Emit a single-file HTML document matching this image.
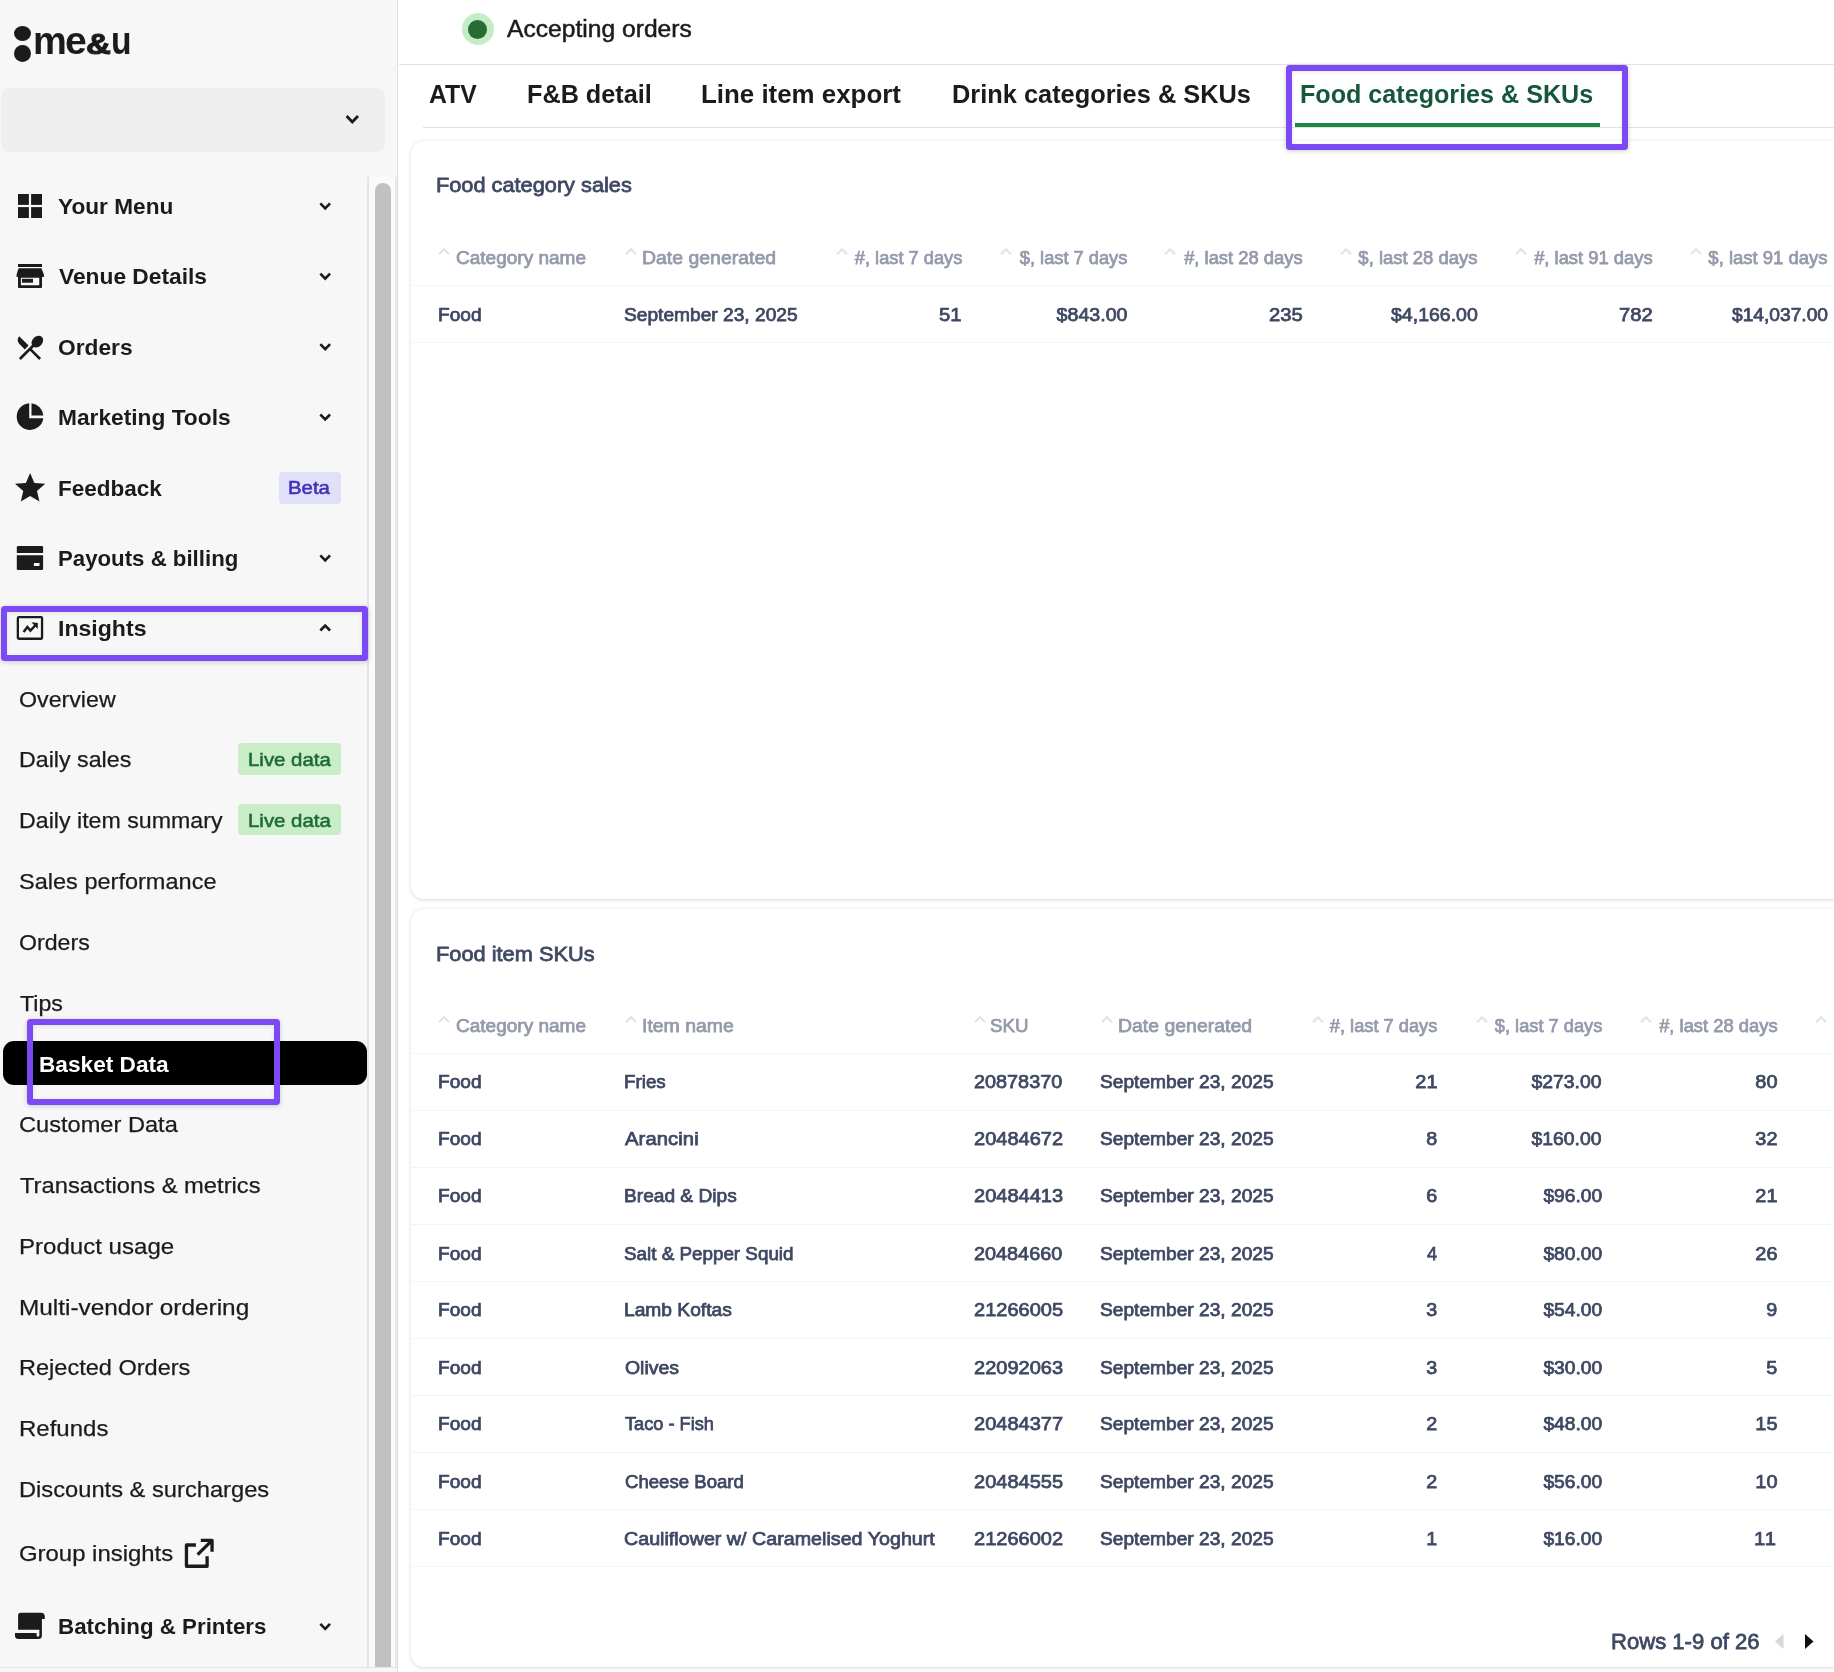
<!DOCTYPE html>
<html lang="en"><head><meta charset="utf-8"><title>me&amp;u – Basket Data</title>
<style>
html,body{margin:0;padding:0;}
body{width:1834px;height:1672px;overflow:hidden;position:relative;background:#fff;font-family:"Liberation Sans",sans-serif;}
.t{position:absolute;white-space:pre;font-family:"Liberation Sans",sans-serif;}
.abs{position:absolute;}
#text{position:absolute;left:0;top:0;width:1834px;height:1672px;will-change:transform;}
#sidebar{position:absolute;left:0;top:0;width:397.2px;height:1672px;background:#f7f7f7;border-right:1px solid #e0e0e0;box-sizing:content-box;}
#venue-select{position:absolute;left:1px;top:88px;width:383.5px;height:64px;background:#eeeeee;border-radius:8px;}
#track{position:absolute;left:367.1px;top:177px;width:26.1px;height:1490px;background:#fafafa;border-left:2px solid #e4e4e4;border-right:2px solid #e9e9e9;}
#thumb{position:absolute;left:375px;top:183px;width:16px;height:1490px;background:#c1c1c1;border-radius:8px 8px 0 0;}
#sidebar-foot{position:absolute;left:0;top:1667px;width:397.2px;height:5px;background:#f7f7f7;border-top:1.2px solid #e4e4e4;}
.badge{position:absolute;border-radius:4px;}
.hl{position:absolute;border:6px solid #7c4af4;border-radius:3.5px;box-sizing:border-box;box-shadow:0 1px 5px rgba(0,0,0,.20),inset 0 1px 4px rgba(0,0,0,.10);}
#pill{position:absolute;left:3px;top:1040.5px;width:364px;height:44px;background:#000;border-radius:11px;}
#topbar{position:absolute;left:398.5px;top:0;right:0;height:64px;border-bottom:1.5px solid #e3e3e3;background:#fff;}
#tabline{position:absolute;left:423px;top:126.5px;right:0;height:1.5px;background:#e2e2e2;}
#tabactive{position:absolute;left:1295px;top:123.3px;width:305px;height:4.2px;background:#1d874b;}
.card{position:absolute;left:411px;right:-11px;background:#fff;border-radius:13px;box-shadow:0 1px 4px rgba(0,0,0,.13),0 0 2px rgba(0,0,0,.05);}
.div{position:absolute;left:411px;right:0;height:1.3px;background:#f3f4f5;}
svg{position:absolute;overflow:visible;}
</style></head>
<body>
<!-- ===== main pane ===== -->
<div id="topbar"></div>
<div class="abs" style="left:461.9px;top:12.9px;width:32.2px;height:32.2px;border-radius:50%;background:#c5edc5;"></div>
<div class="abs" style="left:468px;top:19.6px;width:19.4px;height:19.4px;border-radius:50%;background:#256c35;"></div>
<div id="tabline"></div>
<div id="tabactive"></div>
<div class="card" id="card1" style="top:141px;height:757.5px;"></div>
<div class="card" id="card2" style="top:908.5px;height:758.5px;"></div>
<div class="div" style="top:285px"></div>
<div class="div" style="top:342px"></div>
<div class="div" style="top:1052.6px"></div>
<div class="div" style="top:1109.6px"></div>
<div class="div" style="top:1166.6px"></div>
<div class="div" style="top:1223.6px"></div>
<div class="div" style="top:1280.6px"></div>
<div class="div" style="top:1337.6px"></div>
<div class="div" style="top:1394.6px"></div>
<div class="div" style="top:1451.6px"></div>
<div class="div" style="top:1508.6px"></div>
<div class="div" style="top:1565.6px"></div>

<svg style="left:438px;top:248.3px" width="12" height="7" viewBox="0 0 12 7"><path d="M1 6.2 L6 1.2 L11 6.2" fill="none" stroke="#e1e3ea" stroke-width="2.1"/></svg>
<svg style="left:625px;top:248.3px" width="12" height="7" viewBox="0 0 12 7"><path d="M1 6.2 L6 1.2 L11 6.2" fill="none" stroke="#e1e3ea" stroke-width="2.1"/></svg>
<svg style="left:836px;top:248.3px" width="12" height="7" viewBox="0 0 12 7"><path d="M1 6.2 L6 1.2 L11 6.2" fill="none" stroke="#e1e3ea" stroke-width="2.1"/></svg>
<svg style="left:1000px;top:248.3px" width="12" height="7" viewBox="0 0 12 7"><path d="M1 6.2 L6 1.2 L11 6.2" fill="none" stroke="#e1e3ea" stroke-width="2.1"/></svg>
<svg style="left:1164px;top:248.3px" width="12" height="7" viewBox="0 0 12 7"><path d="M1 6.2 L6 1.2 L11 6.2" fill="none" stroke="#e1e3ea" stroke-width="2.1"/></svg>
<svg style="left:1339.5px;top:248.3px" width="12" height="7" viewBox="0 0 12 7"><path d="M1 6.2 L6 1.2 L11 6.2" fill="none" stroke="#e1e3ea" stroke-width="2.1"/></svg>
<svg style="left:1514.5px;top:248.3px" width="12" height="7" viewBox="0 0 12 7"><path d="M1 6.2 L6 1.2 L11 6.2" fill="none" stroke="#e1e3ea" stroke-width="2.1"/></svg>
<svg style="left:1690px;top:248.3px" width="12" height="7" viewBox="0 0 12 7"><path d="M1 6.2 L6 1.2 L11 6.2" fill="none" stroke="#e1e3ea" stroke-width="2.1"/></svg>
<svg style="left:438px;top:1016.3px" width="12" height="7" viewBox="0 0 12 7"><path d="M1 6.2 L6 1.2 L11 6.2" fill="none" stroke="#e1e3ea" stroke-width="2.1"/></svg>
<svg style="left:625px;top:1016.3px" width="12" height="7" viewBox="0 0 12 7"><path d="M1 6.2 L6 1.2 L11 6.2" fill="none" stroke="#e1e3ea" stroke-width="2.1"/></svg>
<svg style="left:973.5px;top:1016.3px" width="12" height="7" viewBox="0 0 12 7"><path d="M1 6.2 L6 1.2 L11 6.2" fill="none" stroke="#e1e3ea" stroke-width="2.1"/></svg>
<svg style="left:1101px;top:1016.3px" width="12" height="7" viewBox="0 0 12 7"><path d="M1 6.2 L6 1.2 L11 6.2" fill="none" stroke="#e1e3ea" stroke-width="2.1"/></svg>
<svg style="left:1312px;top:1016.3px" width="12" height="7" viewBox="0 0 12 7"><path d="M1 6.2 L6 1.2 L11 6.2" fill="none" stroke="#e1e3ea" stroke-width="2.1"/></svg>
<svg style="left:1476px;top:1016.3px" width="12" height="7" viewBox="0 0 12 7"><path d="M1 6.2 L6 1.2 L11 6.2" fill="none" stroke="#e1e3ea" stroke-width="2.1"/></svg>
<svg style="left:1640px;top:1016.3px" width="12" height="7" viewBox="0 0 12 7"><path d="M1 6.2 L6 1.2 L11 6.2" fill="none" stroke="#e1e3ea" stroke-width="2.1"/></svg>
<svg style="left:1815px;top:1016.3px" width="12" height="7" viewBox="0 0 12 7"><path d="M1 6.2 L6 1.2 L11 6.2" fill="none" stroke="#e1e3ea" stroke-width="2.1"/></svg>

<!-- pagination arrows -->
<svg style="left:1775px;top:1634px" width="9" height="15" viewBox="0 0 9 15"><path d="M8.5 0 L8.5 15 L0 7.5 Z" fill="#d6d8dc"/></svg>
<svg style="left:1805px;top:1634px" width="9" height="15" viewBox="0 0 9 15"><path d="M0 0 L0 15 L8.5 7.5 Z" fill="#111"/></svg>
<div class="hl" style="left:1285.7px;top:65.2px;width:342.3px;height:85px;"></div>

<!-- ===== sidebar ===== -->
<div id="sidebar"></div>
<div id="venue-select"></div>
<div id="track"></div>
<div id="thumb"></div>
<div id="sidebar-foot"></div>
<!-- logo dots -->
<div class="abs" style="left:14px;top:25.7px;width:17px;height:15px;border-radius:8.5px/7.5px;background:#1b1b1b;"></div>
<div class="abs" style="left:14px;top:44.5px;width:17px;height:17px;border-radius:50%;background:#1b1b1b;"></div>
<!-- chevrons -->
<svg style="left:0;top:0" width="1" height="1"><path d="M346.6 116.05 L352.3 121.95 L358.0 116.05" fill="none" stroke="#1b1b1b" stroke-width="2.9"/></svg>
<svg style="left:0;top:0" width="1" height="1"><path d="M320.34999999999997 203.3 L325.2 208.3 L330.05 203.3" fill="none" stroke="#1b1b1b" stroke-width="2.6"/></svg>
<svg style="left:0;top:0" width="1" height="1"><path d="M320.34999999999997 273.70000000000005 L325.2 278.70000000000005 L330.05 273.70000000000005" fill="none" stroke="#1b1b1b" stroke-width="2.6"/></svg>
<svg style="left:0;top:0" width="1" height="1"><path d="M320.34999999999997 344.1 L325.2 349.1 L330.05 344.1" fill="none" stroke="#1b1b1b" stroke-width="2.6"/></svg>
<svg style="left:0;top:0" width="1" height="1"><path d="M320.34999999999997 414.5 L325.2 419.5 L330.05 414.5" fill="none" stroke="#1b1b1b" stroke-width="2.6"/></svg>
<svg style="left:0;top:0" width="1" height="1"><path d="M320.34999999999997 555.3 L325.2 560.3 L330.05 555.3" fill="none" stroke="#1b1b1b" stroke-width="2.6"/></svg>
<svg style="left:0;top:0" width="1" height="1"><path d="M320.34999999999997 630.5 L325.2 625.5 L330.05 630.5" fill="none" stroke="#1b1b1b" stroke-width="2.6"/></svg>
<svg style="left:0;top:0" width="1" height="1"><path d="M320.34999999999997 1623.9 L325.2 1628.9 L330.05 1623.9" fill="none" stroke="#1b1b1b" stroke-width="2.6"/></svg>
<!-- icons -->
<svg style="left:0;top:0" width="400" height="1672" viewBox="0 0 400 1672" fill="#1b1b1b">
<!-- Your Menu: grid -->
<rect x="18" y="194" width="10.9" height="10.9"/><rect x="31.1" y="194" width="10.9" height="10.9"/>
<rect x="18" y="207.1" width="10.9" height="10.9"/><rect x="31.1" y="207.1" width="10.9" height="10.9"/>
<!-- Venue Details: store -->
<rect x="18" y="264" width="24" height="3"/>
<path d="M18.6 268.3 H41.4 L43.9 274.6 V276.9 H16.6 V274.6 Z"/>
<path d="M18 276 H42 V287.1 a1 1 0 0 1 -1 1 H19 a1 1 0 0 1 -1 -1 Z M20.9 277.75 V285.3 H39.25 V277.75 Z" fill-rule="evenodd"/>
<rect x="22" y="278.8" width="11" height="3.9"/>
<!-- Orders: restaurant_menu -->
<g transform="translate(14,331.6) scale(1.3333)"><path d="M8.1 13.34l2.83-2.83L3.91 3.5c-1.56 1.56-1.56 4.09 0 5.66l4.19 4.18zm6.78-1.81c1.53.71 3.68.21 5.27-1.38 1.91-1.91 2.28-4.65.81-6.12-1.46-1.46-4.2-1.1-6.12.81-1.59 1.59-2.09 3.74-1.38 5.27L3.7 19.87l1.41 1.41L12 14.41l6.88 6.88 1.41-1.41L13.41 13l1.47-1.47z"/></g>
<!-- Marketing Tools: pie -->
<path d="M29.2 403.3 A13.35 13.35 0 1 0 43.3 418.2 H29.2 Z"/>
<path d="M31.5 403.35 A13.35 13.35 0 0 1 43.3 415.5 H31.5 Z"/>
<!-- Feedback: star -->
<g transform="translate(12,469.9) scale(1.51)"><path d="M12 17.27L18.18 21l-1.64-7.03L22 9.24l-7.19-.61L12 2 9.19 8.63 2 9.24l5.46 4.73L5.82 21z"/></g>
<!-- Payouts: card -->
<path d="M16.8 552.9 V547.4 a1.3 1.3 0 0 1 1.3 -1.3 H41.8 a1.3 1.3 0 0 1 1.3 1.3 V552.9 Z"/>
<path d="M16.8 555.3 H43.1 V568.8 a1.3 1.3 0 0 1 -1.3 1.3 H18.1 a1.3 1.3 0 0 1 -1.3 -1.3 Z M33.9 563.1 V566.1 H39.5 V563.1 Z" fill-rule="evenodd"/>
<!-- Insights -->
<rect x="17.85" y="617.15" width="24.2" height="21.6" rx="1" fill="none" stroke="#1b1b1b" stroke-width="2.3"/>
<path d="M23.6 631.9 L27.4 627.0 L30.4 630.7 L35.6 625.0" fill="none" stroke="#1b1b1b" stroke-width="2.5" stroke-linejoin="miter"/>
<path d="M31.45 622.3 L37.85 622.9 L37.7 629 Z"/>
<!-- Group insights: open in new -->
<path d="M195.9 1545 H186.45 V1566.25 H207.1 V1556.2" fill="none" stroke="#1b1b1b" stroke-width="3.3" stroke-linejoin="round"/>
<path d="M200.8 1540.35 H212.05 V1551.8 M212 1540.4 L197.6 1554.6" fill="none" stroke="#1b1b1b" stroke-width="3.3" stroke-linejoin="round"/>
<!-- Batching & Printers: scroll -->
<path d="M18.1 1629.8 V1615.4 a2.7 2.7 0 0 1 2.7 -2.7 H41 a3.8 3.8 0 0 1 3.8 3.8 V1619 H41.9 V1635.5 a3.5 3.5 0 0 1 -3.5 3.5 H18.5 a3.5 3.5 0 0 1 -3.5 -3.5 V1632.9 H36.6 V1635.3 a1.375 1.4 0 0 0 2.75 0 V1629.8 Z"/>
</svg>

<div class="badge" style="left:279px;top:472.2px;width:62px;height:31.4px;background:#e0e0f8;"></div>
<div class="badge" style="left:238px;top:743.3px;width:103px;height:31.3px;background:#c9edc7;"></div>
<div class="badge" style="left:238px;top:804px;width:103px;height:31.3px;background:#c9edc7;"></div>
<div id="pill"></div>
<div class="hl" style="left:1px;top:606px;width:367.1px;height:55px;"></div>
<div class="hl" style="left:27.1px;top:1019.3px;width:253.3px;height:86px;"></div>
<!-- ===== text ===== -->
<div id="text">
<span class="t" style="top:20.56px;font-size:39.5px;line-height:39.5px;font-weight:700;color:#1b1b1b;left:32.90px;transform:scaleX(0.963);transform-origin:0 0;">m</span>
<span class="t" style="top:20.56px;font-size:39.5px;line-height:39.5px;font-weight:700;color:#1b1b1b;left:64.60px;transform:scaleX(0.99);transform-origin:0 0;">e</span>
<span class="t" style="top:29.03px;font-size:29.5px;line-height:29.5px;font-weight:700;color:#1b1b1b;left:85.50px;-webkit-text-stroke:1.0px #1b1b1b;transform:scaleX(1.17);transform-origin:0 0;">&amp;</span>
<span class="t" style="top:20.56px;font-size:39.5px;line-height:39.5px;font-weight:700;color:#1b1b1b;left:110.70px;transform:scaleX(0.85);transform-origin:0 0;">u</span>
<span class="t" style="top:195.65px;font-size:22.5px;line-height:22.5px;font-weight:700;color:#1b1b1b;left:58.20px;transform:scaleX(1.0063);transform-origin:0 0;">Your Menu</span>
<span class="t" style="top:266.05px;font-size:22.5px;line-height:22.5px;font-weight:700;color:#1b1b1b;left:59.00px;transform:scaleX(1.0116);transform-origin:0 0;">Venue Details</span>
<span class="t" style="top:337.15px;font-size:22.5px;line-height:22.5px;font-weight:700;color:#1b1b1b;left:58.20px;transform:scaleX(1.0109);transform-origin:0 0;">Orders</span>
<span class="t" style="top:406.85px;font-size:22.5px;line-height:22.5px;font-weight:700;color:#1b1b1b;left:58.20px;transform:scaleX(1.0102);transform-origin:0 0;">Marketing Tools</span>
<span class="t" style="top:477.95px;font-size:22.5px;line-height:22.5px;font-weight:700;color:#1b1b1b;left:58.20px;transform:scaleX(0.9999);transform-origin:0 0;">Feedback</span>
<span class="t" style="top:547.65px;font-size:22.5px;line-height:22.5px;font-weight:700;color:#1b1b1b;left:58.20px;transform:scaleX(0.9878);transform-origin:0 0;">Payouts &amp; billing</span>
<span class="t" style="top:618.05px;font-size:22.5px;line-height:22.5px;font-weight:700;color:#1b1b1b;left:58.20px;transform:scaleX(1.0259);transform-origin:0 0;">Insights</span>
<span class="t" style="top:1615.65px;font-size:22.5px;line-height:22.5px;font-weight:700;color:#1b1b1b;left:58.20px;transform:scaleX(0.9926);transform-origin:0 0;">Batching &amp; Printers</span>
<span class="t" style="top:688.95px;font-size:22.5px;line-height:22.5px;font-weight:400;color:#1b1b1b;left:19.30px;transform:scaleX(1.0311);transform-origin:0 0;-webkit-text-stroke:0.25px #1b1b1b;">Overview</span>
<span class="t" style="top:749.05px;font-size:22.5px;line-height:22.5px;font-weight:400;color:#1b1b1b;left:18.50px;transform:scaleX(1.0322);transform-origin:0 0;-webkit-text-stroke:0.25px #1b1b1b;">Daily sales</span>
<span class="t" style="top:809.85px;font-size:22.5px;line-height:22.5px;font-weight:400;color:#1b1b1b;left:18.50px;transform:scaleX(1.0307);transform-origin:0 0;-webkit-text-stroke:0.25px #1b1b1b;">Daily item summary</span>
<span class="t" style="top:870.65px;font-size:22.5px;line-height:22.5px;font-weight:400;color:#1b1b1b;left:19.30px;transform:scaleX(1.0458);transform-origin:0 0;-webkit-text-stroke:0.25px #1b1b1b;">Sales performance</span>
<span class="t" style="top:932.15px;font-size:22.5px;line-height:22.5px;font-weight:400;color:#1b1b1b;left:19.30px;transform:scaleX(1.0281);transform-origin:0 0;-webkit-text-stroke:0.25px #1b1b1b;">Orders</span>
<span class="t" style="top:992.95px;font-size:22.5px;line-height:22.5px;font-weight:400;color:#1b1b1b;left:20.10px;transform:scaleX(1.0295);transform-origin:0 0;-webkit-text-stroke:0.25px #1b1b1b;">Tips</span>
<span class="t" style="top:1113.85px;font-size:22.5px;line-height:22.5px;font-weight:400;color:#1b1b1b;left:19.30px;transform:scaleX(1.0495);transform-origin:0 0;-webkit-text-stroke:0.25px #1b1b1b;">Customer Data</span>
<span class="t" style="top:1174.65px;font-size:22.5px;line-height:22.5px;font-weight:400;color:#1b1b1b;left:20.10px;transform:scaleX(1.0552);transform-origin:0 0;-webkit-text-stroke:0.25px #1b1b1b;">Transactions &amp; metrics</span>
<span class="t" style="top:1236.15px;font-size:22.5px;line-height:22.5px;font-weight:400;color:#1b1b1b;left:18.50px;transform:scaleX(1.0695);transform-origin:0 0;-webkit-text-stroke:0.25px #1b1b1b;">Product usage</span>
<span class="t" style="top:1296.95px;font-size:22.5px;line-height:22.5px;font-weight:400;color:#1b1b1b;left:18.50px;transform:scaleX(1.0827);transform-origin:0 0;-webkit-text-stroke:0.25px #1b1b1b;">Multi-vendor ordering</span>
<span class="t" style="top:1357.05px;font-size:22.5px;line-height:22.5px;font-weight:400;color:#1b1b1b;left:18.50px;transform:scaleX(1.0462);transform-origin:0 0;-webkit-text-stroke:0.25px #1b1b1b;">Rejected Orders</span>
<span class="t" style="top:1417.85px;font-size:22.5px;line-height:22.5px;font-weight:400;color:#1b1b1b;left:18.50px;transform:scaleX(1.0667);transform-origin:0 0;-webkit-text-stroke:0.25px #1b1b1b;">Refunds</span>
<span class="t" style="top:1478.65px;font-size:22.5px;line-height:22.5px;font-weight:400;color:#1b1b1b;left:18.50px;transform:scaleX(1.0529);transform-origin:0 0;-webkit-text-stroke:0.25px #1b1b1b;">Discounts &amp; surcharges</span>
<span class="t" style="top:1542.65px;font-size:22.5px;line-height:22.5px;font-weight:400;color:#1b1b1b;left:19.30px;transform:scaleX(1.0626);transform-origin:0 0;-webkit-text-stroke:0.25px #1b1b1b;">Group insights</span>
<span class="t" style="top:1054.90px;font-size:21.5px;line-height:21.5px;font-weight:700;color:#ffffff;left:39.20px;transform:scaleX(1.0535);transform-origin:0 0;">Basket Data</span>
<span class="t" style="top:478.96px;font-size:18.6px;line-height:18.6px;font-weight:400;color:#4230b8;left:288.30px;transform:scaleX(1.0954);transform-origin:0 0;-webkit-text-stroke:0.55px #4230b8;">Beta</span>
<span class="t" style="top:750.96px;font-size:18.6px;line-height:18.6px;font-weight:400;color:#1f6b35;left:247.98px;transform:scaleX(1.0971);transform-origin:0 0;-webkit-text-stroke:0.55px #1f6b35;">Live data</span>
<span class="t" style="top:811.76px;font-size:18.6px;line-height:18.6px;font-weight:400;color:#1f6b35;left:247.98px;transform:scaleX(1.0971);transform-origin:0 0;-webkit-text-stroke:0.55px #1f6b35;">Live data</span>
<span class="t" style="top:17.78px;font-size:23.3px;line-height:23.3px;font-weight:400;color:#1b1b1b;left:507.22px;transform:scaleX(1.0570);transform-origin:0 0;-webkit-text-stroke:0.5px #1b1b1b;">Accepting orders</span>
<span class="t" style="top:81.51px;font-size:25.5px;line-height:25.5px;font-weight:700;color:#1b1b1b;left:429.20px;transform:scaleX(0.9713);transform-origin:0 0;">ATV</span>
<span class="t" style="top:81.51px;font-size:25.5px;line-height:25.5px;font-weight:700;color:#1b1b1b;left:527.40px;transform:scaleX(0.9894);transform-origin:0 0;">F&amp;B detail</span>
<span class="t" style="top:81.51px;font-size:25.5px;line-height:25.5px;font-weight:700;color:#1b1b1b;left:701.16px;transform:scaleX(1.0152);transform-origin:0 0;">Line item export</span>
<span class="t" style="top:81.51px;font-size:25.5px;line-height:25.5px;font-weight:700;color:#1b1b1b;left:952.40px;transform:scaleX(0.9951);transform-origin:0 0;">Drink categories &amp; SKUs</span>
<span class="t" style="top:81.51px;font-size:25.5px;line-height:25.5px;font-weight:700;color:#15573a;left:1300.40px;transform:scaleX(0.9853);transform-origin:0 0;">Food categories &amp; SKUs</span>
<span class="t" style="top:175.18px;font-size:20.7px;line-height:20.7px;font-weight:400;color:#3f4863;left:436.20px;transform:scaleX(1.0510);transform-origin:0 0;-webkit-text-stroke:0.755px #3f4863;">Food category sales</span>
<span class="t" style="top:944.48px;font-size:20.7px;line-height:20.7px;font-weight:400;color:#3f4863;left:436.20px;transform:scaleX(1.0529);transform-origin:0 0;-webkit-text-stroke:0.755px #3f4863;">Food item SKUs</span>
<span class="t" style="top:248.57px;font-size:18.4px;line-height:18.4px;font-weight:400;color:#949aab;left:456.00px;transform:scaleX(1.0338);transform-origin:0 0;-webkit-text-stroke:0.75px #949aab;">Category name</span>
<span class="t" style="top:248.57px;font-size:18.4px;line-height:18.4px;font-weight:400;color:#949aab;left:642.20px;transform:scaleX(1.0571);transform-origin:0 0;-webkit-text-stroke:0.75px #949aab;">Date generated</span>
<span class="t" style="top:248.57px;font-size:18.4px;line-height:18.4px;font-weight:400;color:#949aab;right:872.00px;transform:scaleX(0.9926);transform-origin:100% 0;-webkit-text-stroke:0.75px #949aab;">#, last 7 days</span>
<span class="t" style="top:248.57px;font-size:18.4px;line-height:18.4px;font-weight:400;color:#949aab;right:707.00px;transform:scaleX(0.9926);transform-origin:100% 0;-webkit-text-stroke:0.75px #949aab;">$, last 7 days</span>
<span class="t" style="top:248.57px;font-size:18.4px;line-height:18.4px;font-weight:400;color:#949aab;right:531.76px;transform:scaleX(0.9987);transform-origin:100% 0;-webkit-text-stroke:0.75px #949aab;">#, last 28 days</span>
<span class="t" style="top:248.57px;font-size:18.4px;line-height:18.4px;font-weight:400;color:#949aab;right:356.20px;transform:scaleX(1.0054);transform-origin:100% 0;-webkit-text-stroke:0.75px #949aab;">$, last 28 days</span>
<span class="t" style="top:248.57px;font-size:18.4px;line-height:18.4px;font-weight:400;color:#949aab;right:181.66px;transform:scaleX(0.9987);transform-origin:100% 0;-webkit-text-stroke:0.75px #949aab;">#, last 91 days</span>
<span class="t" style="top:248.57px;font-size:18.4px;line-height:18.4px;font-weight:400;color:#949aab;right:6.32px;transform:scaleX(1.0054);transform-origin:100% 0;-webkit-text-stroke:0.75px #949aab;">$, last 91 days</span>
<span class="t" style="top:305.77px;font-size:18.4px;line-height:18.4px;font-weight:400;color:#3f4863;left:438.20px;transform:scaleX(1.0376);transform-origin:0 0;-webkit-text-stroke:0.75px #3f4863;">Food</span>
<span class="t" style="top:305.77px;font-size:18.4px;line-height:18.4px;font-weight:400;color:#3f4863;left:624.20px;transform:scaleX(1.0417);transform-origin:0 0;-webkit-text-stroke:0.75px #3f4863;">September 23, 2025</span>
<span class="t" style="top:305.77px;font-size:18.4px;line-height:18.4px;font-weight:400;color:#3f4863;letter-spacing:0.168px;right:871.82px;transform:scaleX(1.1000);transform-origin:100% 0;-webkit-text-stroke:0.75px #3f4863;">51</span>
<span class="t" style="top:305.77px;font-size:18.4px;line-height:18.4px;font-weight:400;color:#3f4863;right:707.00px;transform:scaleX(1.0664);transform-origin:100% 0;-webkit-text-stroke:0.75px #3f4863;">$843.00</span>
<span class="t" style="top:305.77px;font-size:18.4px;line-height:18.4px;font-weight:400;color:#3f4863;letter-spacing:0.020px;right:531.74px;transform:scaleX(1.1000);transform-origin:100% 0;-webkit-text-stroke:0.75px #3f4863;">235</span>
<span class="t" style="top:305.77px;font-size:18.4px;line-height:18.4px;font-weight:400;color:#3f4863;right:356.20px;transform:scaleX(1.0608);transform-origin:100% 0;-webkit-text-stroke:0.75px #3f4863;">$4,166.00</span>
<span class="t" style="top:305.77px;font-size:18.4px;line-height:18.4px;font-weight:400;color:#3f4863;letter-spacing:0.020px;right:181.64px;transform:scaleX(1.1000);transform-origin:100% 0;-webkit-text-stroke:0.75px #3f4863;">782</span>
<span class="t" style="top:305.77px;font-size:18.4px;line-height:18.4px;font-weight:400;color:#3f4863;right:6.32px;transform:scaleX(1.0440);transform-origin:100% 0;-webkit-text-stroke:0.75px #3f4863;">$14,037.00</span>
<span class="t" style="top:1016.57px;font-size:18.4px;line-height:18.4px;font-weight:400;color:#949aab;left:456.00px;transform:scaleX(1.0338);transform-origin:0 0;-webkit-text-stroke:0.75px #949aab;">Category name</span>
<span class="t" style="top:1016.57px;font-size:18.4px;line-height:18.4px;font-weight:400;color:#949aab;left:642.20px;transform:scaleX(1.0567);transform-origin:0 0;-webkit-text-stroke:0.75px #949aab;">Item name</span>
<span class="t" style="top:1016.57px;font-size:18.4px;line-height:18.4px;font-weight:400;color:#949aab;left:990.42px;transform:scaleX(1.0146);transform-origin:0 0;-webkit-text-stroke:0.75px #949aab;">SKU</span>
<span class="t" style="top:1016.57px;font-size:18.4px;line-height:18.4px;font-weight:400;color:#949aab;left:1117.52px;transform:scaleX(1.0571);transform-origin:0 0;-webkit-text-stroke:0.75px #949aab;">Date generated</span>
<span class="t" style="top:1016.57px;font-size:18.4px;line-height:18.4px;font-weight:400;color:#949aab;right:396.44px;transform:scaleX(0.9926);transform-origin:100% 0;-webkit-text-stroke:0.75px #949aab;">#, last 7 days</span>
<span class="t" style="top:1016.57px;font-size:18.4px;line-height:18.4px;font-weight:400;color:#949aab;right:232.10px;transform:scaleX(0.9926);transform-origin:100% 0;-webkit-text-stroke:0.75px #949aab;">$, last 7 days</span>
<span class="t" style="top:1016.57px;font-size:18.4px;line-height:18.4px;font-weight:400;color:#949aab;right:56.88px;transform:scaleX(0.9987);transform-origin:100% 0;-webkit-text-stroke:0.75px #949aab;">#, last 28 days</span>
<span class="t" style="top:1073.42px;font-size:18.4px;line-height:18.4px;font-weight:400;color:#3f4863;left:438.20px;transform:scaleX(1.0376);transform-origin:0 0;-webkit-text-stroke:0.75px #3f4863;">Food</span>
<span class="t" style="top:1073.42px;font-size:18.4px;line-height:18.4px;font-weight:400;color:#3f4863;left:624.20px;transform:scaleX(1.0202);transform-origin:0 0;-webkit-text-stroke:0.75px #3f4863;">Fries</span>
<span class="t" style="top:1073.42px;font-size:18.4px;line-height:18.4px;font-weight:400;color:#3f4863;left:974.00px;transform:scaleX(1.0781);transform-origin:0 0;-webkit-text-stroke:0.75px #3f4863;">20878370</span>
<span class="t" style="top:1073.42px;font-size:18.4px;line-height:18.4px;font-weight:400;color:#3f4863;left:1100.20px;transform:scaleX(1.0417);transform-origin:0 0;-webkit-text-stroke:0.75px #3f4863;">September 23, 2025</span>
<span class="t" style="top:1073.42px;font-size:18.4px;line-height:18.4px;font-weight:400;color:#3f4863;right:396.44px;transform:scaleX(1.0816);transform-origin:100% 0;-webkit-text-stroke:0.75px #3f4863;">21</span>
<span class="t" style="top:1073.42px;font-size:18.4px;line-height:18.4px;font-weight:400;color:#3f4863;right:232.10px;transform:scaleX(1.0529);transform-origin:100% 0;-webkit-text-stroke:0.75px #3f4863;">$273.00</span>
<span class="t" style="top:1073.42px;font-size:18.4px;line-height:18.4px;font-weight:400;color:#3f4863;right:56.88px;transform:scaleX(1.0816);transform-origin:100% 0;-webkit-text-stroke:0.75px #3f4863;">80</span>
<span class="t" style="top:1130.42px;font-size:18.4px;line-height:18.4px;font-weight:400;color:#3f4863;left:438.20px;transform:scaleX(1.0376);transform-origin:0 0;-webkit-text-stroke:0.75px #3f4863;">Food</span>
<span class="t" style="top:1130.42px;font-size:18.4px;line-height:18.4px;font-weight:400;color:#3f4863;letter-spacing:0.078px;left:625.00px;transform:scaleX(1.1000);transform-origin:0 0;-webkit-text-stroke:0.75px #3f4863;">Arancini</span>
<span class="t" style="top:1130.42px;font-size:18.4px;line-height:18.4px;font-weight:400;color:#3f4863;left:974.00px;transform:scaleX(1.0879);transform-origin:0 0;-webkit-text-stroke:0.75px #3f4863;">20484672</span>
<span class="t" style="top:1130.42px;font-size:18.4px;line-height:18.4px;font-weight:400;color:#3f4863;left:1100.20px;transform:scaleX(1.0417);transform-origin:0 0;-webkit-text-stroke:0.75px #3f4863;">September 23, 2025</span>
<span class="t" style="top:1130.42px;font-size:18.4px;line-height:18.4px;font-weight:400;color:#3f4863;right:396.44px;transform:scaleX(1.0719);transform-origin:100% 0;-webkit-text-stroke:0.75px #3f4863;">8</span>
<span class="t" style="top:1130.42px;font-size:18.4px;line-height:18.4px;font-weight:400;color:#3f4863;right:232.10px;transform:scaleX(1.0529);transform-origin:100% 0;-webkit-text-stroke:0.75px #3f4863;">$160.00</span>
<span class="t" style="top:1130.42px;font-size:18.4px;line-height:18.4px;font-weight:400;color:#3f4863;right:56.88px;transform:scaleX(1.0816);transform-origin:100% 0;-webkit-text-stroke:0.75px #3f4863;">32</span>
<span class="t" style="top:1187.42px;font-size:18.4px;line-height:18.4px;font-weight:400;color:#3f4863;left:438.20px;transform:scaleX(1.0376);transform-origin:0 0;-webkit-text-stroke:0.75px #3f4863;">Food</span>
<span class="t" style="top:1187.42px;font-size:18.4px;line-height:18.4px;font-weight:400;color:#3f4863;left:624.20px;transform:scaleX(1.0401);transform-origin:0 0;-webkit-text-stroke:0.75px #3f4863;">Bread &amp; Dips</span>
<span class="t" style="top:1187.42px;font-size:18.4px;line-height:18.4px;font-weight:400;color:#3f4863;left:974.00px;transform:scaleX(1.0879);transform-origin:0 0;-webkit-text-stroke:0.75px #3f4863;">20484413</span>
<span class="t" style="top:1187.42px;font-size:18.4px;line-height:18.4px;font-weight:400;color:#3f4863;left:1100.20px;transform:scaleX(1.0417);transform-origin:0 0;-webkit-text-stroke:0.75px #3f4863;">September 23, 2025</span>
<span class="t" style="top:1187.42px;font-size:18.4px;line-height:18.4px;font-weight:400;color:#3f4863;right:396.44px;transform:scaleX(1.0719);transform-origin:100% 0;-webkit-text-stroke:0.75px #3f4863;">6</span>
<span class="t" style="top:1187.42px;font-size:18.4px;line-height:18.4px;font-weight:400;color:#3f4863;right:232.10px;transform:scaleX(1.0459);transform-origin:100% 0;-webkit-text-stroke:0.75px #3f4863;">$96.00</span>
<span class="t" style="top:1187.42px;font-size:18.4px;line-height:18.4px;font-weight:400;color:#3f4863;right:56.88px;transform:scaleX(1.0816);transform-origin:100% 0;-webkit-text-stroke:0.75px #3f4863;">21</span>
<span class="t" style="top:1244.77px;font-size:18.4px;line-height:18.4px;font-weight:400;color:#3f4863;left:438.20px;transform:scaleX(1.0376);transform-origin:0 0;-webkit-text-stroke:0.75px #3f4863;">Food</span>
<span class="t" style="top:1244.77px;font-size:18.4px;line-height:18.4px;font-weight:400;color:#3f4863;left:624.20px;transform:scaleX(1.0234);transform-origin:0 0;-webkit-text-stroke:0.75px #3f4863;">Salt &amp; Pepper Squid</span>
<span class="t" style="top:1244.77px;font-size:18.4px;line-height:18.4px;font-weight:400;color:#3f4863;left:974.00px;transform:scaleX(1.0781);transform-origin:0 0;-webkit-text-stroke:0.75px #3f4863;">20484660</span>
<span class="t" style="top:1244.77px;font-size:18.4px;line-height:18.4px;font-weight:400;color:#3f4863;left:1100.20px;transform:scaleX(1.0417);transform-origin:0 0;-webkit-text-stroke:0.75px #3f4863;">September 23, 2025</span>
<span class="t" style="top:1244.77px;font-size:18.4px;line-height:18.4px;font-weight:400;color:#3f4863;right:396.44px;transform:scaleX(0.9937);transform-origin:100% 0;-webkit-text-stroke:0.75px #3f4863;">4</span>
<span class="t" style="top:1244.77px;font-size:18.4px;line-height:18.4px;font-weight:400;color:#3f4863;right:232.10px;transform:scaleX(1.0459);transform-origin:100% 0;-webkit-text-stroke:0.75px #3f4863;">$80.00</span>
<span class="t" style="top:1244.77px;font-size:18.4px;line-height:18.4px;font-weight:400;color:#3f4863;right:56.88px;transform:scaleX(1.0816);transform-origin:100% 0;-webkit-text-stroke:0.75px #3f4863;">26</span>
<span class="t" style="top:1301.42px;font-size:18.4px;line-height:18.4px;font-weight:400;color:#3f4863;left:438.20px;transform:scaleX(1.0376);transform-origin:0 0;-webkit-text-stroke:0.75px #3f4863;">Food</span>
<span class="t" style="top:1301.42px;font-size:18.4px;line-height:18.4px;font-weight:400;color:#3f4863;left:624.20px;transform:scaleX(1.0441);transform-origin:0 0;-webkit-text-stroke:0.75px #3f4863;">Lamb Koftas</span>
<span class="t" style="top:1301.42px;font-size:18.4px;line-height:18.4px;font-weight:400;color:#3f4863;left:974.00px;transform:scaleX(1.0879);transform-origin:0 0;-webkit-text-stroke:0.75px #3f4863;">21266005</span>
<span class="t" style="top:1301.42px;font-size:18.4px;line-height:18.4px;font-weight:400;color:#3f4863;left:1100.20px;transform:scaleX(1.0417);transform-origin:0 0;-webkit-text-stroke:0.75px #3f4863;">September 23, 2025</span>
<span class="t" style="top:1301.42px;font-size:18.4px;line-height:18.4px;font-weight:400;color:#3f4863;right:396.44px;transform:scaleX(1.0719);transform-origin:100% 0;-webkit-text-stroke:0.75px #3f4863;">3</span>
<span class="t" style="top:1301.42px;font-size:18.4px;line-height:18.4px;font-weight:400;color:#3f4863;right:232.10px;transform:scaleX(1.0459);transform-origin:100% 0;-webkit-text-stroke:0.75px #3f4863;">$54.00</span>
<span class="t" style="top:1301.42px;font-size:18.4px;line-height:18.4px;font-weight:400;color:#3f4863;right:56.88px;transform:scaleX(1.0719);transform-origin:100% 0;-webkit-text-stroke:0.75px #3f4863;">9</span>
<span class="t" style="top:1358.77px;font-size:18.4px;line-height:18.4px;font-weight:400;color:#3f4863;left:438.20px;transform:scaleX(1.0376);transform-origin:0 0;-webkit-text-stroke:0.75px #3f4863;">Food</span>
<span class="t" style="top:1358.77px;font-size:18.4px;line-height:18.4px;font-weight:400;color:#3f4863;left:625.00px;transform:scaleX(1.0566);transform-origin:0 0;-webkit-text-stroke:0.75px #3f4863;">Olives</span>
<span class="t" style="top:1358.77px;font-size:18.4px;line-height:18.4px;font-weight:400;color:#3f4863;left:974.00px;transform:scaleX(1.0879);transform-origin:0 0;-webkit-text-stroke:0.75px #3f4863;">22092063</span>
<span class="t" style="top:1358.77px;font-size:18.4px;line-height:18.4px;font-weight:400;color:#3f4863;left:1100.20px;transform:scaleX(1.0417);transform-origin:0 0;-webkit-text-stroke:0.75px #3f4863;">September 23, 2025</span>
<span class="t" style="top:1358.77px;font-size:18.4px;line-height:18.4px;font-weight:400;color:#3f4863;right:396.44px;transform:scaleX(1.0719);transform-origin:100% 0;-webkit-text-stroke:0.75px #3f4863;">3</span>
<span class="t" style="top:1358.77px;font-size:18.4px;line-height:18.4px;font-weight:400;color:#3f4863;right:232.10px;transform:scaleX(1.0459);transform-origin:100% 0;-webkit-text-stroke:0.75px #3f4863;">$30.00</span>
<span class="t" style="top:1358.77px;font-size:18.4px;line-height:18.4px;font-weight:400;color:#3f4863;right:56.88px;transform:scaleX(1.0719);transform-origin:100% 0;-webkit-text-stroke:0.75px #3f4863;">5</span>
<span class="t" style="top:1415.42px;font-size:18.4px;line-height:18.4px;font-weight:400;color:#3f4863;left:438.20px;transform:scaleX(1.0376);transform-origin:0 0;-webkit-text-stroke:0.75px #3f4863;">Food</span>
<span class="t" style="top:1415.42px;font-size:18.4px;line-height:18.4px;font-weight:400;color:#3f4863;left:625.00px;transform:scaleX(0.9885);transform-origin:0 0;-webkit-text-stroke:0.75px #3f4863;">Taco - Fish</span>
<span class="t" style="top:1415.42px;font-size:18.4px;line-height:18.4px;font-weight:400;color:#3f4863;left:974.00px;transform:scaleX(1.0879);transform-origin:0 0;-webkit-text-stroke:0.75px #3f4863;">20484377</span>
<span class="t" style="top:1415.42px;font-size:18.4px;line-height:18.4px;font-weight:400;color:#3f4863;left:1100.20px;transform:scaleX(1.0417);transform-origin:0 0;-webkit-text-stroke:0.75px #3f4863;">September 23, 2025</span>
<span class="t" style="top:1415.42px;font-size:18.4px;line-height:18.4px;font-weight:400;color:#3f4863;right:396.44px;transform:scaleX(1.0719);transform-origin:100% 0;-webkit-text-stroke:0.75px #3f4863;">2</span>
<span class="t" style="top:1415.42px;font-size:18.4px;line-height:18.4px;font-weight:400;color:#3f4863;right:232.10px;transform:scaleX(1.0459);transform-origin:100% 0;-webkit-text-stroke:0.75px #3f4863;">$48.00</span>
<span class="t" style="top:1415.42px;font-size:18.4px;line-height:18.4px;font-weight:400;color:#3f4863;right:56.88px;transform:scaleX(1.0816);transform-origin:100% 0;-webkit-text-stroke:0.75px #3f4863;">15</span>
<span class="t" style="top:1472.77px;font-size:18.4px;line-height:18.4px;font-weight:400;color:#3f4863;left:438.20px;transform:scaleX(1.0376);transform-origin:0 0;-webkit-text-stroke:0.75px #3f4863;">Food</span>
<span class="t" style="top:1472.77px;font-size:18.4px;line-height:18.4px;font-weight:400;color:#3f4863;left:625.00px;transform:scaleX(1.0112);transform-origin:0 0;-webkit-text-stroke:0.75px #3f4863;">Cheese Board</span>
<span class="t" style="top:1472.77px;font-size:18.4px;line-height:18.4px;font-weight:400;color:#3f4863;left:974.00px;transform:scaleX(1.0879);transform-origin:0 0;-webkit-text-stroke:0.75px #3f4863;">20484555</span>
<span class="t" style="top:1472.77px;font-size:18.4px;line-height:18.4px;font-weight:400;color:#3f4863;left:1100.20px;transform:scaleX(1.0417);transform-origin:0 0;-webkit-text-stroke:0.75px #3f4863;">September 23, 2025</span>
<span class="t" style="top:1472.77px;font-size:18.4px;line-height:18.4px;font-weight:400;color:#3f4863;right:396.44px;transform:scaleX(1.0719);transform-origin:100% 0;-webkit-text-stroke:0.75px #3f4863;">2</span>
<span class="t" style="top:1472.77px;font-size:18.4px;line-height:18.4px;font-weight:400;color:#3f4863;right:232.10px;transform:scaleX(1.0459);transform-origin:100% 0;-webkit-text-stroke:0.75px #3f4863;">$56.00</span>
<span class="t" style="top:1472.77px;font-size:18.4px;line-height:18.4px;font-weight:400;color:#3f4863;right:56.88px;transform:scaleX(1.0816);transform-origin:100% 0;-webkit-text-stroke:0.75px #3f4863;">10</span>
<span class="t" style="top:1529.77px;font-size:18.4px;line-height:18.4px;font-weight:400;color:#3f4863;left:438.20px;transform:scaleX(1.0376);transform-origin:0 0;-webkit-text-stroke:0.75px #3f4863;">Food</span>
<span class="t" style="top:1529.77px;font-size:18.4px;line-height:18.4px;font-weight:400;color:#3f4863;left:624.20px;transform:scaleX(1.0706);transform-origin:0 0;-webkit-text-stroke:0.75px #3f4863;">Cauliflower w/ Caramelised Yoghurt</span>
<span class="t" style="top:1529.77px;font-size:18.4px;line-height:18.4px;font-weight:400;color:#3f4863;left:974.00px;transform:scaleX(1.0879);transform-origin:0 0;-webkit-text-stroke:0.75px #3f4863;">21266002</span>
<span class="t" style="top:1529.77px;font-size:18.4px;line-height:18.4px;font-weight:400;color:#3f4863;left:1100.20px;transform:scaleX(1.0417);transform-origin:0 0;-webkit-text-stroke:0.75px #3f4863;">September 23, 2025</span>
<span class="t" style="top:1529.77px;font-size:18.4px;line-height:18.4px;font-weight:400;color:#3f4863;right:396.44px;transform:scaleX(1.0719);transform-origin:100% 0;-webkit-text-stroke:0.75px #3f4863;">1</span>
<span class="t" style="top:1529.77px;font-size:18.4px;line-height:18.4px;font-weight:400;color:#3f4863;right:232.10px;transform:scaleX(1.0459);transform-origin:100% 0;-webkit-text-stroke:0.75px #3f4863;">$16.00</span>
<span class="t" style="top:1529.77px;font-size:18.4px;line-height:18.4px;font-weight:400;color:#3f4863;letter-spacing:1.034px;right:56.54px;transform:scaleX(1.1000);transform-origin:100% 0;-webkit-text-stroke:0.75px #3f4863;">11</span>
<span class="t" style="top:1631.13px;font-size:21.7px;line-height:21.7px;font-weight:400;color:#3f4863;left:1611.20px;transform:scaleX(1.0180);transform-origin:0 0;-webkit-text-stroke:0.755px #3f4863;">Rows 1-9 of 26</span>
</div>
</body></html>
